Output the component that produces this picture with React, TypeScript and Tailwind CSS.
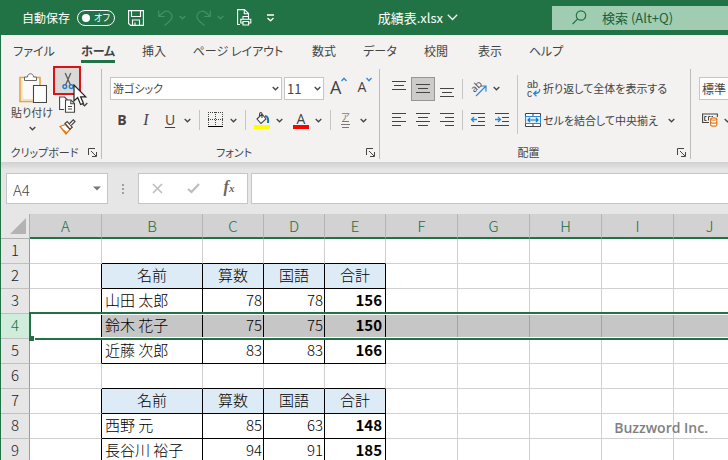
import type { ReactNode } from "react";

const columns = ["A", "B", "C", "D", "E", "F", "G", "H", "I", "J"];

type Row = { n: number; kind: "blank" | "head" | "data"; cells?: string[]; selected?: boolean };

const rows: Row[] = [
  { n: 1, kind: "blank" },
  { n: 2, kind: "head", cells: ["名前", "算数", "国語", "合計"] },
  { n: 3, kind: "data", cells: ["山田 太郎", "78", "78", "156"] },
  { n: 4, kind: "data", cells: ["鈴木 花子", "75", "75", "150"], selected: true },
  { n: 5, kind: "data", cells: ["近藤 次郎", "83", "83", "166"] },
  { n: 6, kind: "blank" },
  { n: 7, kind: "head", cells: ["名前", "算数", "国語", "合計"] },
  { n: 8, kind: "data", cells: ["西野 元", "85", "63", "148"] },
  { n: 9, kind: "data", cells: ["長谷川 裕子", "94", "91", "185"] },
];

const tabs = [
  { label: "ファイル", width: "w-16" },
  { label: "ホーム", width: "w-16", active: true },
  { label: "挿入", width: "w-12" },
  { label: "ページ レイアウト", width: "w-30" },
  { label: "数式", width: "w-13" },
  { label: "データ", width: "w-15" },
  { label: "校閲", width: "w-13" },
  { label: "表示", width: "w-14" },
  { label: "ヘルプ", width: "w-14" },
];

function Chevron({ className = "" }: { className?: string }) {
  return (
    <svg className={`shrink-0 ${className}`} width="7" height="5" viewBox="0 0 7 5" fill="none" stroke="currentColor" strokeWidth="1.3">
      <path d="M0.7 1 L3.5 3.8 L6.3 1" />
    </svg>
  );
}

function Lines({ d }: { d: string }) {
  return (
    <svg width="16" height="16" viewBox="0 0 16 16" fill="none" stroke="#444" strokeWidth="1" shapeRendering="crispEdges" className="shrink-0">
      <path d={d} />
    </svg>
  );
}

function IconButton({ label, children, className = "" }: { label: string; children: ReactNode; className?: string }) {
  return (
    <button type="button" aria-label={label} className={`flex h-6 w-6 shrink-0 items-center justify-center ${className}`}>
      {children}
    </button>
  );
}

function SplitButton({ label, children }: { label: string; children: ReactNode }) {
  return (
    <button type="button" aria-label={label} className="flex h-6 shrink-0 items-center gap-1.5">
      {children}
      <Chevron />
    </button>
  );
}

function Separator({ className = "" }: { className?: string }) {
  return <div className={`h-5 w-px shrink-0 bg-[#c8c6c4] ${className}`} />;
}

function Group({ title, className = "", launcher = true, children }: { title: string; className?: string; launcher?: boolean; children: ReactNode }) {
  return (
    <section aria-label={title || "数値"} className={`flex shrink-0 flex-col border-r border-[#bebcba] ${className}`}>
      <div className="h-19">{children}</div>
      <div className="flex h-3.5 items-center pr-1">
        <span className="flex-1 text-center leading-3.5">{title}</span>
        {launcher && (
          <button type="button" aria-label={`${title}の設定`}>
            <svg width="9" height="9" viewBox="0 0 9 9" fill="none" stroke="#444" strokeWidth="1">
              <path d="M0.5 7 V0.5 H7 M3 3 L8 8 M8.5 4 V8.5 H4" />
            </svg>
          </button>
        )}
      </div>
    </section>
  );
}

function TitleBar() {
  return (
    <header className="flex h-[35px] items-center bg-[#217346] text-white">
      <div className="flex flex-1 items-center pl-[21px]">
        <label htmlFor="autosave">自動保存</label>
        <span className="relative ml-[7px] flex h-4 w-[38px] items-center rounded-full border border-white">
          <input id="autosave" type="checkbox" role="switch" className="absolute inset-0 m-0 h-full w-full appearance-none" />
          <span className="ml-1 h-2 w-2 shrink-0 rounded-full bg-white" />
          <span className="ml-1 whitespace-nowrap text-[9px] leading-3">オフ</span>
        </span>
        <button type="button" aria-label="上書き保存" className="ml-[13px]">
          <svg width="16" height="16" viewBox="0 0 16 16" fill="none" stroke="#fff" strokeWidth="1.1">
            <path d="M0.6 0.6 H15.4 V15.4 H2.6 L0.6 13.4 Z M3.5 0.6 V6.5 H12.5 V0.6 M4.5 15.4 V10 H11.5 V15.4 M7 15 V12.5" />
          </svg>
        </button>
        <button type="button" aria-label="元に戻す" className="ml-3.5 flex items-center gap-1.5 text-[#468f69]">
          <svg width="15" height="16" viewBox="0 0 15 16" fill="none" stroke="currentColor" strokeWidth="1.2">
            <path d="M0.7 0.5 V6.5 H6.7 M0.9 6.3 L5.5 2.3 C10 -0.8 16 4 13.3 9 C12.5 10.5 9 13.5 6.5 15.5" />
          </svg>
          <Chevron />
        </button>
        <button type="button" aria-label="やり直し" className="ml-2.5 flex items-center gap-1.5 text-[#468f69]">
          <svg width="15" height="16" viewBox="0 0 15 16" fill="none" stroke="currentColor" strokeWidth="1.2">
            <path d="M14.3 0.5 V6.5 H8.3 M14.1 6.3 L9.5 2.3 C5 -0.8 -1 4 1.7 9 C2.5 10.5 6 13.5 8.5 15.5" />
          </svg>
          <Chevron />
        </button>
        <button type="button" aria-label="印刷プレビュー" className="ml-3">
          <svg width="16" height="17" viewBox="0 0 16 17" fill="none" stroke="#fff" strokeWidth="1.1">
            <path d="M4 15.5 H1.6 V0.6 H8.5 L12.5 4.6 V7 M8.3 0.8 V4.8 H12.3" />
            <path d="M7 10 V7.5 H12.5 V10 M6.5 14 H4.8 V10.3 H14.8 V14 H13 M7 12.5 H12.6 V16 H7 Z" />
          </svg>
        </button>
        <button type="button" aria-label="クイック アクセスのカスタマイズ" className="ml-3.5">
          <svg width="9" height="8" viewBox="0 0 9 8" fill="none" stroke="#fff" strokeWidth="1.3">
            <path d="M1 1 H8 M1.5 4 L4.5 6.8 L7.5 4" />
          </svg>
        </button>
      </div>
      <button type="button" className="mr-[94px] flex items-center gap-1 text-[13px]">
        成績表.xlsx
        <svg width="11" height="7" viewBox="0 0 11 7" fill="none" stroke="#fff" strokeWidth="1.3">
          <path d="M0.8 0.8 L5.5 5.5 L10.2 0.8" />
        </svg>
      </button>
      <div className="flex h-6 w-44 items-center bg-[#a0cdb2] pl-5">
        <svg className="shrink-0" width="15" height="15" viewBox="0 0 15 15" fill="none" stroke="#217346" strokeWidth="1.2">
          <circle cx="9" cy="5.5" r="4.7" />
          <path d="M5.7 8.8 L0.6 14" />
        </svg>
        <input
          type="search"
          aria-label="検索"
          placeholder="検索 (Alt+Q)"
          className="ml-[15px] w-full min-w-0 bg-transparent text-[13px] outline-none placeholder:text-[#1b6139] placeholder:opacity-100"
        />
      </div>
    </header>
  );
}

function ClipboardGroup() {
  return (
    <Group title="クリップボード" className="w-[101px]">
      <div className="flex">
        <button type="button" className="flex w-[52px] flex-col items-center pl-2.5 pt-1">
          <svg width="30" height="31" viewBox="0 0 30 31" fill="none">
            <path d="M8 4.5 H3 V28.5 H23 V4.5 H18" stroke="#e9a33b" strokeWidth="1.6" fill="#fbfaf8" />
            <path d="M4.8 6.5 V26.8 H16" stroke="#f7ddb0" strokeWidth="1.4" />
            <path d="M7.5 7.5 V4 H10.5 C10.5 -0.3 16.5 -0.3 16.5 4 H19.5 V7.5 Z" fill="#fff" stroke="#666" />
            <path d="M16.5 12.5 H29.5 V29.5 H16.5 Z" fill="#fff" stroke="#444" strokeWidth="1.1" />
          </svg>
          <span className="h-4 whitespace-nowrap leading-4">貼り付け</span>
          <Chevron className="mt-1.5" />
        </button>
        <div className="flex flex-col pl-[3px]">
          <IconButton label="切り取り">
            <svg width="12" height="18" viewBox="0 0 12 18" fill="none">
              <path d="M3.2 1 L8.4 13 M8.8 1 L3.6 13" stroke="#666" strokeWidth="1.3" />
              <circle cx="2.8" cy="14.6" r="1.9" stroke="#2b88d8" strokeWidth="1.4" />
              <circle cx="9.2" cy="14.6" r="1.9" stroke="#2b88d8" strokeWidth="1.4" />
            </svg>
          </IconButton>
          <button type="button" aria-label="コピー" className="flex h-[22px] items-center gap-[5px] pl-[3px]">
            <svg width="17" height="17" viewBox="0 0 17 17" fill="#fff" stroke="#444" strokeWidth="1.1">
              <path d="M5 13.5 H0.6 V1 H5.5 L8.5 4" />
              <path d="M6.5 4 H12 L15.5 7.5 V16.3 H6.5 Z" />
              <path d="M11.8 4.2 V7.7 H15.3 M9 10.5 H13 M9 13 H13" fill="none" />
            </svg>
            <Chevron />
          </button>
          <button type="button" aria-label="書式のコピー/貼り付け" className="flex h-6 items-center pl-[3px]">
            <svg width="17" height="16" viewBox="0 0 17 16" fill="none">
              <path d="M1 7.5 L6.5 5.5 L11 10.5 L7 15 Z" fill="#fff" stroke="#e07a1f" strokeWidth="1.3" />
              <path d="M3 9.5 L8.5 13.5 L7 15 L2 9 Z" fill="#e07a1f" />
              <path d="M6 4.5 L8.2 2.6 L13.2 8.2 L11 10.2 Z" fill="#fff" stroke="#444" strokeWidth="1.2" />
              <path d="M10.3 4.7 L14.3 0.8 L16 2.5 L12.3 6.4" stroke="#444" strokeWidth="1.2" fill="#fff" />
            </svg>
          </button>
        </div>
      </div>
    </Group>
  );
}

function FontGroup() {
  return (
    <Group title="フォント" className="w-[278px]">
      <div className="flex flex-col gap-2 pl-2 pt-2">
        <div className="flex h-[23px] items-center gap-0.5">
          <span className="relative">
            <select aria-label="フォント" className="block h-[23px] w-[172px] appearance-none border border-[#c8c6c4] bg-white pl-0.5">
              <option>游ゴシック</option>
            </select>
            <Chevron className="pointer-events-none absolute right-[3px] top-[9px]" />
          </span>
          <span className="relative">
            <select aria-label="フォント サイズ" className="block h-[23px] w-10 appearance-none border border-[#c8c6c4] bg-white pl-0.5 text-[13px]">
              <option>11</option>
            </select>
            <Chevron className="pointer-events-none absolute right-[3px] top-[9px]" />
          </span>
          <button type="button" aria-label="フォント サイズの拡大" className="ml-1 flex items-start pb-1 font-['Open_Sans'] text-lg leading-5">
            A
            <svg width="6" height="5" viewBox="0 0 6 5" fill="none" stroke="#2b88d8" strokeWidth="1.3">
              <path d="M0.5 4 L3 1.3 L5.5 4" />
            </svg>
          </button>
          <button type="button" aria-label="フォント サイズの縮小" className="ml-2 flex items-start pb-1 font-['Open_Sans'] text-sm leading-6">
            A
            <svg width="6" height="5" viewBox="0 0 6 5" className="mt-0.5" fill="none" stroke="#2b88d8" strokeWidth="1.3">
              <path d="M0.5 1 L3 3.7 L5.5 1" />
            </svg>
          </button>
        </div>
        <div className="flex h-6 items-center text-sm">
          <IconButton label="太字"><span className="font-['Open_Sans'] font-bold">B</span></IconButton>
          <IconButton label="斜体"><span className="font-['Liberation_Serif'] text-base italic">I</span></IconButton>
          <IconButton label="下線"><span className="font-['Open_Sans'] underline underline-offset-2">U</span></IconButton>
          <button type="button" aria-label="下線の種類" className="ml-0.5"><Chevron /></button>
          <Separator className="mx-2" />
          <SplitButton label="罫線">
            <svg width="16" height="16" viewBox="0 0 16 16" fill="none" stroke="#444" shapeRendering="crispEdges">
              <path d="M0 0.5 H16 M0 7.5 H16 M0.5 0 V14 M7.5 0 V14 M14.5 0 V14" strokeDasharray="1 1" />
              <path d="M0 14.5 H15" stroke="#000" strokeWidth="1" />
            </svg>
          </SplitButton>
          <Separator className="mx-2" />
          <SplitButton label="塗りつぶしの色">
            <svg width="16" height="17" viewBox="0 0 16 17" fill="none">
              <path d="M3 7 L8 2 L12 7 L7 11.5 Z M8 6 V2.2 C8 -0.2 5.5 0.4 5.5 2.2 V4.5" stroke="#444" strokeWidth="1.1" fill="#fff" />
              <path d="M11 4 C14 4 14.5 7 14 11" stroke="#1f6fb5" strokeWidth="2" />
              <path d="M0 13 H16 V17 H0 Z" fill="#ff0" />
            </svg>
          </SplitButton>
          <div className="w-2.5" />
          <SplitButton label="フォントの色">
            <span className="flex h-[17px] w-4 flex-col items-center border-b-4 border-[#f00] font-['Open_Sans'] text-sm leading-[13px]">A</span>
          </SplitButton>
          <Separator className="mx-2" />
          <button type="button" aria-label="ふりがな" className="flex h-6 items-center gap-2.5 pl-0.5 text-[#777]">
            <span className="flex flex-col items-center text-[9px] leading-[9px]">
              ア
              <svg width="9" height="7" viewBox="0 0 9 7" stroke="currentColor" shapeRendering="crispEdges">
                <path d="M1 0.5 H8 M0 3.5 H9 M1 6.5 H8" />
              </svg>
            </span>
            <Chevron className="text-[#444]" />
          </button>
        </div>
      </div>
    </Group>
  );
}

function AlignmentGroup() {
  return (
    <Group title="配置" className="w-[311px]">
      <div className="flex pl-[7px] pt-2">
        <div className="flex flex-col gap-2">
          <div className="flex h-[23px] items-center">
            <IconButton label="上揃え"><Lines d="M1 0.5 H15 M3 4.5 H13 M1 8.5 H15" /></IconButton>
            <IconButton label="上下中央揃え" className="border border-[#979593] bg-[#cdcbc9]"><Lines d="M1 3.5 H15 M3 7.5 H13 M1 11.5 H15" /></IconButton>
            <IconButton label="下揃え"><Lines d="M1 7.5 H15 M3 11.5 H13 M1 15.5 H15" /></IconButton>
            <Separator className="mx-[3px]" />
            <button type="button" aria-label="方向" className="flex h-6 items-center gap-1.5 pl-1">
              <span className="relative flex h-[17px] w-[17px] items-start">
                <span className="-rotate-45 font-['Open_Sans'] text-[10px] leading-3">ab</span>
                <svg className="absolute inset-0" width="17" height="17" viewBox="0 0 17 17" fill="none">
                  <path d="M6 16 L15.5 6.5 M10.5 6 H16 V11.5" stroke="#2b88d8" strokeWidth="1.2" />
                </svg>
              </span>
              <Chevron />
            </button>
          </div>
          <div className="flex h-6 items-center">
            <IconButton label="左揃え"><Lines d="M1 1.5 H15 M1 5.5 H10 M1 9.5 H15 M1 13.5 H10" /></IconButton>
            <IconButton label="中央揃え"><Lines d="M1 1.5 H15 M3 5.5 H13 M1 9.5 H15 M3 13.5 H13" /></IconButton>
            <IconButton label="右揃え"><Lines d="M1 1.5 H15 M6 5.5 H15 M1 9.5 H15 M6 13.5 H15" /></IconButton>
            <Separator className="mx-[3px]" />
            <IconButton label="インデントを減らす">
              <svg width="16" height="16" viewBox="0 0 16 16" fill="none" stroke="#444">
                <path d="M1 1.5 H15 M8 5.5 H15 M8 9.5 H15 M1 13.5 H15" />
                <path d="M1.5 7.5 H7 M4 5 L1.5 7.5 L4 10" stroke="#2b88d8" strokeWidth="1.3" />
              </svg>
            </IconButton>
            <IconButton label="インデントを増やす">
              <svg width="16" height="16" viewBox="0 0 16 16" fill="none" stroke="#444">
                <path d="M1 1.5 H15 M8 5.5 H15 M8 9.5 H15 M1 13.5 H15" />
                <path d="M1 7.5 H6.5 M4 5 L6.5 7.5 L4 10" stroke="#2b88d8" strokeWidth="1.3" />
              </svg>
            </IconButton>
          </div>
        </div>
        <div className="-mt-0.5 ml-[3px] h-[59px] w-px bg-[#c8c6c4]" />
        <div className="flex flex-col gap-2 pl-[7px]">
          <button type="button" className="flex h-[23px] items-center gap-0.5 whitespace-nowrap">
            <span className="relative w-4 pl-0.5 text-left font-['Liberation_Sans'] text-[10px] leading-[9px]">
              ab
              <br />
              c
              <svg className="absolute left-0 top-0" width="16" height="17" viewBox="0 0 16 17" fill="none">
                <path d="M14.5 9 C15.5 12 13 13.5 9 13.5 M11.5 10.8 L8.7 13.5 L11.5 16.3" stroke="#2b88d8" strokeWidth="1.3" />
              </svg>
            </span>
            折り返して全体を表示する
          </button>
          <button type="button" className="flex h-6 items-center gap-0.5 whitespace-nowrap">
            <svg width="16" height="16" viewBox="0 0 16 16" fill="none" stroke="#444">
              <path d="M0.5 1.5 H15.5 V14.5 H0.5 Z M8 1.5 V4 M8 12 V14.5" fill="#fff" />
              <path d="M0.5 4.5 H15.5 V11.5 H0.5 Z" fill="#dff0fb" stroke="#2b88d8" />
              <path d="M3 8 H13 M5 6 L3 8 L5 10 M11 6 L13 8 L11 10" stroke="#1f6fb5" strokeWidth="1.2" />
            </svg>
            セルを結合して中央揃え
            <Chevron className="ml-2" />
          </button>
        </div>
      </div>
    </Group>
  );
}

function NumberGroup() {
  return (
    <Group title="" launcher={false} className="w-[140px]">
      <div className="flex flex-col gap-2 pl-2 pt-2">
        <select aria-label="数値の書式" className="h-[23px] w-28 appearance-none border border-[#c8c6c4] bg-white pl-0.5 text-xs">
          <option>標準</option>
        </select>
        <button type="button" aria-label="通貨表示形式" className="flex h-6 items-center gap-1.5 pl-[3px]">
          <svg width="16" height="14" viewBox="0 0 16 14" fill="none">
            <path d="M7 9.5 H0.6 V1 H15.4 V4" stroke="#444" strokeWidth="1.1" />
            <path d="M4.5 3.5 H2.7 V7.5 H4.5 M8.5 3.5 H6.5 V7.5 M11 3.5 H9.5" stroke="#444" />
            <path d="M8.6 6 C8.6 4.5 14.8 4.5 14.8 6 V12 C14.8 13.6 8.6 13.6 8.6 12 Z" fill="#fff" stroke="#e07a1f" strokeWidth="1.2" />
            <path d="M8.6 6 C8.6 7.5 14.8 7.5 14.8 6 M8.6 9 C8.6 10.6 14.8 10.6 14.8 9" stroke="#e07a1f" strokeWidth="1.2" />
          </svg>
          <Chevron />
        </button>
      </div>
    </Group>
  );
}

function Ribbon() {
  return (
    <div className="bg-[#f3f2f1] text-[11px] text-[#444]">
      <nav className="flex h-7 pl-px">
        {tabs.map((t) => (
          <button key={t.label} type="button" className={`flex shrink-0 flex-col items-center whitespace-nowrap ${t.width} ${t.active ? "font-bold" : ""}`}>
            <span className="flex flex-1 items-center pt-[7px] text-xs leading-4">{t.label}</span>
            <span className={`h-[3px] w-[34px] ${t.active ? "bg-[#217346]" : ""}`} />
          </button>
        ))}
      </nav>
      <div className="flex overflow-hidden pb-[3px] pt-1.5">
        <ClipboardGroup />
        <FontGroup />
        <AlignmentGroup />
        <NumberGroup />
      </div>
    </div>
  );
}

function FormulaBar() {
  return (
    <div className="flex h-[52px] bg-linear-to-b from-[#d2d0d0] to-[#e6e6e6] to-15% pb-2.5 pl-[5px] pt-[11px] text-[#444]">
      <div className="flex w-[102px] items-center border border-[#c6c6c6] bg-white pl-1.5 pr-1.5">
        <input aria-label="名前ボックス" defaultValue="A4" className="w-full min-w-0 bg-transparent pt-0.5 text-[15px] font-light outline-none" />
        <button type="button" aria-label="名前の一覧">
          <svg width="8" height="5" viewBox="0 0 8 5"><path d="M0 0.5 H8 L4 4.5 Z" fill="#777" /></svg>
        </button>
      </div>
      <div className="flex w-[30px] flex-col items-center justify-center gap-0.5">
        <span className="h-0.5 w-0.5 bg-[#a0a0a0]" />
        <span className="h-0.5 w-0.5 bg-[#a0a0a0]" />
        <span className="h-0.5 w-0.5 bg-[#a0a0a0]" />
      </div>
      <div className="flex w-[110px] items-center border border-[#c6c6c6] bg-white">
        <button type="button" aria-label="キャンセル" className="flex flex-1 justify-center">
          <svg width="11" height="11" viewBox="0 0 11 11" stroke="#bdbdbd" strokeWidth="1.6"><path d="M1 1 L10 10 M10 1 L1 10" /></svg>
        </button>
        <button type="button" aria-label="入力" className="flex flex-1 justify-center">
          <svg width="13" height="11" viewBox="0 0 13 11" fill="none" stroke="#bdbdbd" strokeWidth="2.2"><path d="M1 6 L4.5 9 L12 1" /></svg>
        </button>
        <button type="button" aria-label="関数の挿入" className="flex-1 pb-0.5 font-['Liberation_Serif'] text-base font-bold italic leading-4 text-[#666]">
          f<span className="text-[11px]">x</span>
        </button>
      </div>
      <input aria-label="数式バー" className="ml-[3px] min-w-0 flex-1 border-y border-l border-[#c6c6c6] bg-white px-2 outline-none" />
    </div>
  );
}

function cellClass(row: Row, index: number, next?: Row) {
  const inTable = index >= 1 && index <= 4 && row.kind !== "blank";
  const right = index <= 4 && row.kind !== "blank" ? "border-r-black" : row.selected ? "border-r-[#a3a3a3]" : "border-r-[#d0d0d0]";
  const bottom = index >= 1 && index <= 4 && (inTable || next?.kind === "head") ? "border-b-black" : "border-b-[#d0d0d0]";
  const fill = row.selected && index > 0 ? "bg-[#c6c6c6]" : row.kind === "head" && inTable ? "bg-[#ddebf7]" : "bg-white";
  const text = row.kind === "head" ? "text-center text-[15px]" : index === 1 ? "pl-[3px] text-left text-[15px]" : index === 4 ? "pr-[3px] text-right text-[15px] font-bold" : "pr-px text-right text-[15px]";
  return `h-[25px] overflow-hidden whitespace-nowrap border-b border-r p-0 pb-0.5 leading-5 ${right} ${bottom} ${fill} ${text}`;
}

function Sheet() {
  return (
    <main className="relative overflow-hidden bg-white">
      <table className="w-[745px] table-fixed border-separate border-spacing-0 font-light text-black">
        <colgroup>
          <col className="w-[29px]" />
          <col className="w-18" />
          <col className="w-[101px]" />
          <col className="w-[61px]" />
          <col className="w-[61px]" />
          <col className="w-[61px]" />
          <col className="w-18" />
          <col className="w-18" />
          <col className="w-18" />
          <col className="w-18" />
          <col className="w-18" />
        </colgroup>
        <thead>
          <tr>
            <th scope="col" aria-label="すべて選択" className="h-[25px] border-b border-r border-[#b0b0b0] bg-[#e6e6e6] p-0">
              <svg className="ml-[9px]" width="16" height="16" viewBox="0 0 16 16"><path d="M16 0 V16 H0 Z" fill="#b3b3b3" /></svg>
            </th>
            {columns.map((c) => (
              <th key={c} scope="col" className="h-[25px] border-b-2 border-r border-b-[#217346] border-r-[#b4b4b4] bg-[#d2d2d2] p-0 text-[15px] font-light leading-5 text-[#1d6b40]">
                {c}
              </th>
            ))}
          </tr>
        </thead>
        <tbody>
          {rows.map((row, i) => (
            <tr key={row.n}>
              <th
                scope="row"
                className={`h-[25px] border-b border-r border-b-[#c0c0c0] border-r-[#9b9b9b] p-0 pb-0.5 text-[15px] font-light leading-5 ${row.selected ? "bg-[#d0ecda] text-[#217346]" : "bg-[#e6e6e6] text-[#222]"}`}
              >
                {row.n}
              </th>
              {columns.map((c, index) => (
                <td key={c} className={cellClass(row, index, rows[i + 1])}>
                  {row.cells && index >= 1 && index <= 4 ? row.cells[index - 1] : ""}
                </td>
              ))}
            </tr>
          ))}
        </tbody>
      </table>
      <div className="pointer-events-none absolute left-7 right-0 top-[98px] h-7 border-y-2 border-l-2 border-[#217346]">
        <div className="h-full border-y border-white" />
        <div className="absolute -bottom-[3px] -left-[2px] h-[5px] w-[6px] border-r border-white bg-[#217346]" />
      </div>
      <p className="absolute bottom-7 right-5 font-['Open_Sans'] text-sm font-semibold leading-4 text-[#808080]">Buzzword Inc.</p>
    </main>
  );
}

export default function App() {
  return (
    <div className="relative h-screen overflow-hidden border-l border-[#217346] bg-white font-['Noto_Sans_CJK_JP','Noto_Sans',sans-serif] text-xs [font-feature-settings:'palt']">
      <TitleBar />
      <Ribbon />
      <FormulaBar />
      <Sheet />
      <div className="pointer-events-none absolute left-[52px] top-[66px] h-[29px] w-7 border-2 border-[#d91414] bg-black/10" />
      <svg className="pointer-events-none absolute left-[72px] top-[84px]" width="17" height="24" viewBox="0 0 17 24">
        <path d="M1 1 V17 L4.7 13.6 L7.6 20.5 L10.4 19.2 L7.6 12.8 H12.8 Z" fill="#fff" stroke="#222" strokeWidth="1.2" />
      </svg>
    </div>
  );
}
